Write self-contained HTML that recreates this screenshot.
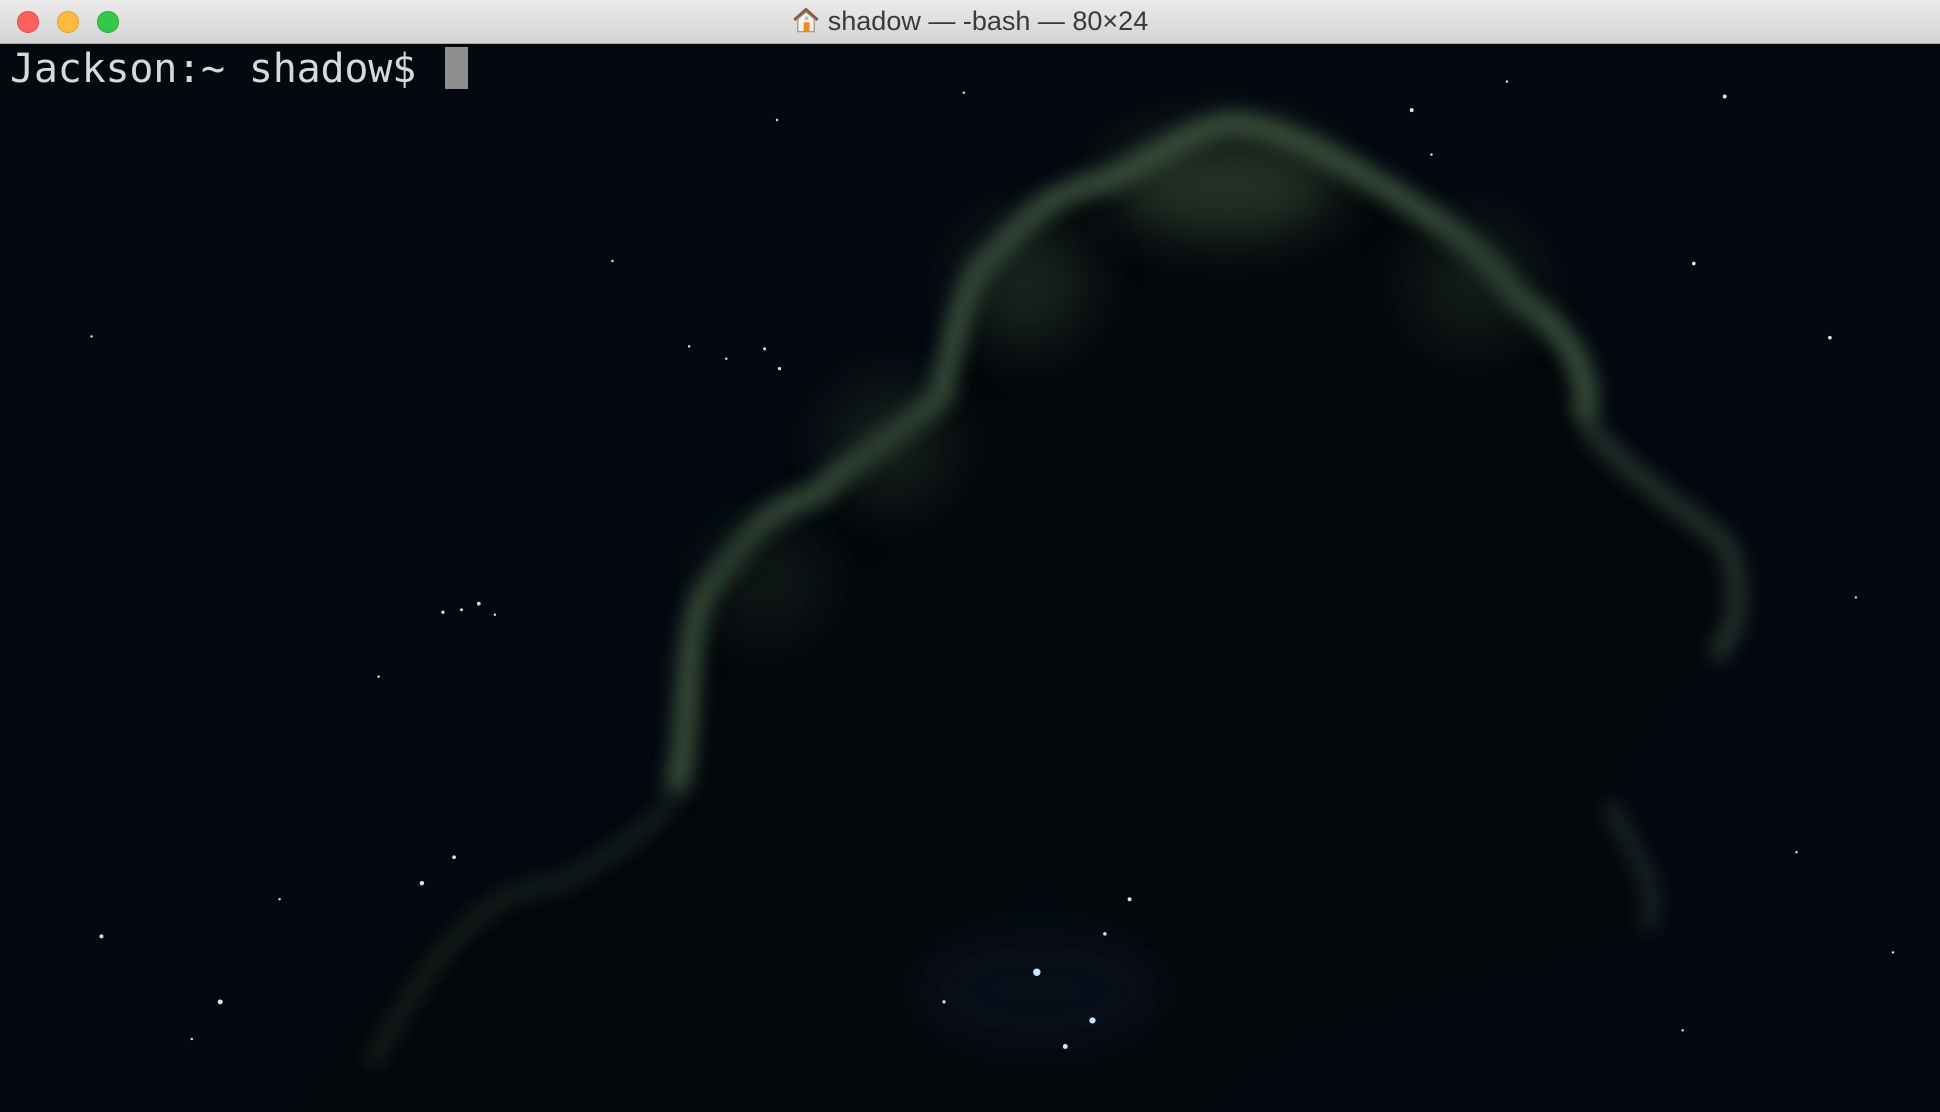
<!DOCTYPE html>
<html><head><meta charset="utf-8"><style>
html,body{margin:0;padding:0;width:1940px;height:1112px;overflow:hidden;background:#040910;}
#bg{position:absolute;left:0;top:0;width:1940px;height:1112px;}
#bar{position:absolute;left:0;top:0;width:1940px;height:44px;background:linear-gradient(#ebeaeb,#d5d4d5);border-bottom:1px solid #a9a9a9;box-sizing:border-box;}
.tl{position:absolute;top:11px;width:22px;height:22px;border-radius:50%;box-sizing:border-box;}
#title{position:absolute;left:0;right:0;top:6px;text-align:center;font:27px "Liberation Sans",sans-serif;color:#3a3a3a;}
#prompt{position:absolute;left:10px;top:46px;font:40px/46px "DejaVu Sans Mono","Liberation Mono",monospace;color:#d8d8d8;letter-spacing:-0.2px;}
#cur{position:absolute;left:445px;top:47px;width:23px;height:42px;background:#8e8e8e;}
</style></head><body>
<svg id="bg" viewBox="0 0 1568 899" preserveAspectRatio="none">
<defs>
<filter id="b8" x="-50%" y="-50%" width="200%" height="200%"><feGaussianBlur stdDeviation="7"/></filter>
<filter id="b20" x="-100%" y="-100%" width="300%" height="300%"><feGaussianBlur stdDeviation="22"/></filter>
</defs>
<rect width="1568" height="899" fill="#040910"/>
<path d="M240,899 C300,800 380,700 450,720 C500,690 540,660 545,640 C560,600 550,520 570,480 C600,440 620,410 660,400 C690,370 730,350 760,320 C770,280 775,250 790,220 C820,190 840,160 880,150 C920,140 950,110 990,100 C1030,100 1060,120 1100,140 C1150,170 1200,200 1225,240 C1260,260 1290,300 1280,340 C1310,380 1360,410 1395,440 C1410,480 1405,510 1385,530 C1350,570 1310,600 1300,650 C1320,690 1345,720 1330,750 C1250,780 1150,800 1050,840 C1000,870 980,899 960,899 Z" fill="#04080c"/>
<path d="M545,640 C560,600 550,520 570,480 C600,440 620,410 660,400 C690,370 730,350 760,320 C770,280 775,250 790,220 C820,190 840,160 880,150 C920,140 950,110 990,100 C1030,100 1060,120 1100,140 C1150,170 1200,200 1225,240 C1260,260 1290,300 1280,340" fill="none" stroke="#4a6448" stroke-width="20" filter="url(#b8)" opacity="0.7"/>
<path d="M1280,340 C1310,380 1360,410 1395,440 C1410,480 1405,510 1385,530" fill="none" stroke="#3a5040" stroke-width="16" filter="url(#b8)" opacity="0.55"/>
<path d="M1300,650 C1320,690 1345,720 1330,750" fill="none" stroke="#34483a" stroke-width="12" filter="url(#b8)" opacity="0.45"/>
<path d="M300,860 C340,790 380,720 450,715 C500,690 540,660 545,640" fill="none" stroke="#1c2a24" stroke-width="14" filter="url(#b8)" opacity="0.6"/>
<ellipse cx="990" cy="150" rx="90" ry="40" fill="#3a5038" filter="url(#b20)" opacity="0.6"/>
<ellipse cx="830" cy="230" rx="50" ry="50" fill="#2a3c2e" filter="url(#b20)" opacity="0.5"/>
<ellipse cx="720" cy="360" rx="50" ry="50" fill="#223228" filter="url(#b20)" opacity="0.5"/>
<ellipse cx="620" cy="470" rx="50" ry="50" fill="#18241e" filter="url(#b20)" opacity="0.5"/>
<ellipse cx="1190" cy="230" rx="50" ry="50" fill="#223228" filter="url(#b20)" opacity="0.45"/>
<ellipse cx="840" cy="800" rx="100" ry="50" fill="#0a1826" filter="url(#b20)" opacity="0.5"/>
<g fill="#cfe6ff">
<circle cx="838" cy="786" r="3"/><circle cx="883" cy="825" r="2.5"/><circle cx="861" cy="846" r="2"/><circle cx="178" cy="810" r="2"/><circle cx="82" cy="757" r="1.6"/>
<circle cx="341" cy="714" r="1.8"/><circle cx="367" cy="693" r="1.5"/><circle cx="387" cy="488" r="1.5"/><circle cx="358" cy="495" r="1.3"/><circle cx="373" cy="493" r="1.2"/>
<circle cx="1141" cy="89" r="1.6"/><circle cx="1394" cy="78" r="1.6"/><circle cx="1369" cy="213" r="1.5"/><circle cx="1479" cy="273" r="1.5"/><circle cx="913" cy="727" r="1.6"/>
<circle cx="893" cy="755" r="1.4"/><circle cx="763" cy="810" r="1.3"/><circle cx="630" cy="298" r="1.3"/><circle cx="618" cy="282" r="1.2"/><circle cx="628" cy="97" r="1"/>
<circle cx="779" cy="75" r="1"/><circle cx="495" cy="211" r="1"/><circle cx="155" cy="840" r="1"/><circle cx="1530" cy="770" r="1"/><circle cx="1452" cy="689" r="1"/>
<circle cx="1360" cy="833" r="1"/><circle cx="1218" cy="66" r="1"/><circle cx="557" cy="280" r="1"/><circle cx="587" cy="290" r="1"/><circle cx="226" cy="727" r="1"/>
<circle cx="400" cy="497" r="1"/><circle cx="1500" cy="483" r="1"/><circle cx="1157" cy="125" r="1"/><circle cx="306" cy="547" r="1"/><circle cx="74" cy="272" r="1"/>
</g>
</svg>
<div id="bar">
<div class="tl" style="left:17px;background:#fc605b;border:1px solid #de4a45"></div>
<div class="tl" style="left:57px;background:#fdbc40;border:1px solid #de9f33"></div>
<div class="tl" style="left:97px;background:#34c84a;border:1px solid #27a83a"></div>
<div id="title"><svg width="28" height="28" viewBox="0 0 24 24" style="vertical-align:-4px;margin-right:8px"><path d="M2,12 L12,3 L22,12" fill="none" stroke="#8a5a3a" stroke-width="2.5"/><path d="M5,11 L12,5 L19,11 V22 H5 Z" fill="#f4f1ec" stroke="#9a8a7a" stroke-width="1"/><rect x="10" y="14" width="5" height="8" fill="#f08a1c"/><rect x="11" y="9" width="3" height="3" fill="#9cb"/></svg>shadow — -bash — 80×24</div>
</div>
<div id="prompt">Jackson:~ shadow$</div>
<div id="cur"></div>
</body></html>
